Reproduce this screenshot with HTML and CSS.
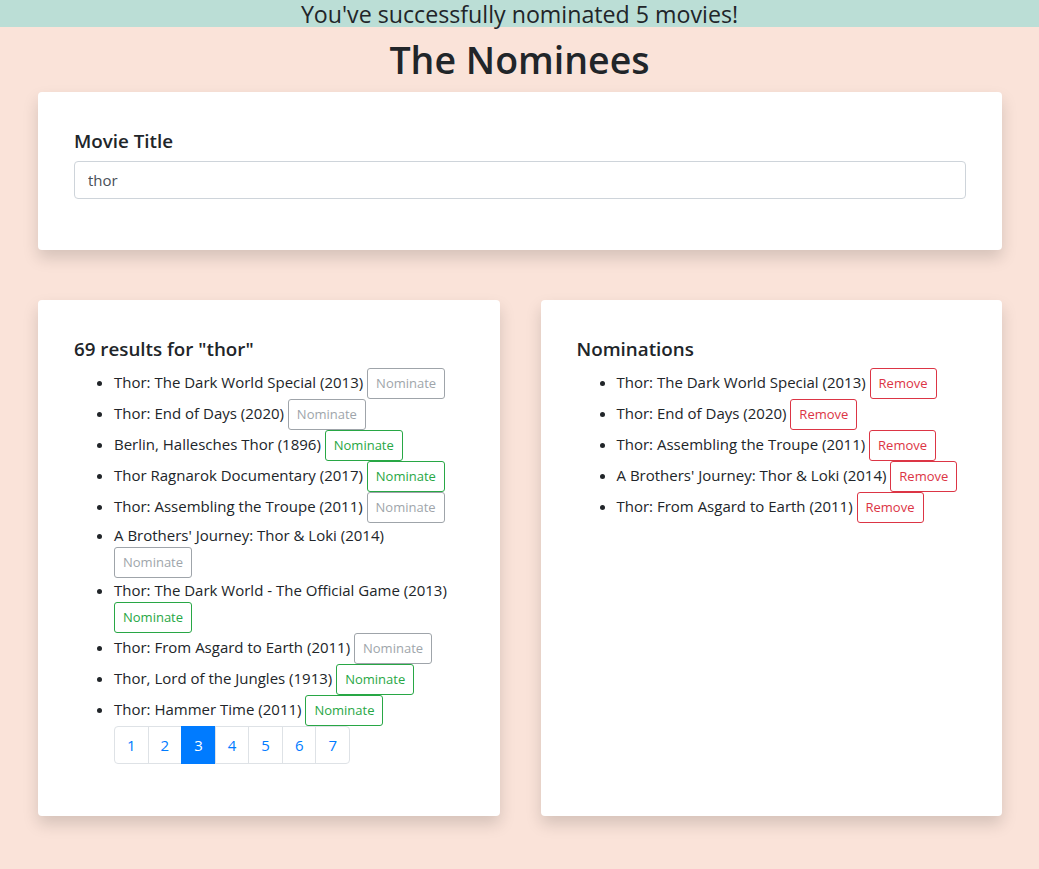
FILE: index.html
```html
<!DOCTYPE html>
<html lang="en">
<head>
<meta charset="utf-8">
<title>The Nominees</title>
<link rel="stylesheet" href="styles.css">
</head>
<body>
<div class="banner">You've successfully nominated 5 movies!</div>
<h1 class="title">The Nominees</h1>
<main class="page">
  <section class="card search-card">
    <label class="card-heading" for="movie">Movie Title</label>
    <input id="movie" class="text-input" type="text" value="thor">
  </section>
  <div class="columns">
    <section class="card">
      <h5 class="card-heading">69 results for "thor"</h5>
      <ul class="movie-list">
        <li>Thor: The Dark World Special (2013) <button class="btn btn-grey" disabled>Nominate</button></li>
        <li>Thor: End of Days (2020) <button class="btn btn-grey" disabled>Nominate</button></li>
        <li>Berlin, Hallesches Thor (1896) <button class="btn btn-green">Nominate</button></li>
        <li>Thor Ragnarok Documentary (2017) <button class="btn btn-green">Nominate</button></li>
        <li>Thor: Assembling the Troupe (2011) <button class="btn btn-grey" disabled>Nominate</button></li>
        <li>A Brothers' Journey: Thor &amp; Loki (2014) <button class="btn btn-grey" disabled>Nominate</button></li>
        <li>Thor: The Dark World - The Official Game (2013) <button class="btn btn-green">Nominate</button></li>
        <li>Thor: From Asgard to Earth (2011) <button class="btn btn-grey" disabled>Nominate</button></li>
        <li>Thor, Lord of the Jungles (1913) <button class="btn btn-green">Nominate</button></li>
        <li>Thor: Hammer Time (2011) <button class="btn btn-green">Nominate</button></li>
      </ul>
      <nav class="pager">
        <a class="page-link first">1</a>
        <a class="page-link">2</a>
        <a class="page-link active">3</a>
        <a class="page-link">4</a>
        <a class="page-link">5</a>
        <a class="page-link">6</a>
        <a class="page-link last">7</a>
      </nav>
    </section>
    <section class="card">
      <h5 class="card-heading">Nominations</h5>
      <ul class="movie-list">
        <li>Thor: The Dark World Special (2013) <button class="btn btn-red">Remove</button></li>
        <li>Thor: End of Days (2020) <button class="btn btn-red">Remove</button></li>
        <li>Thor: Assembling the Troupe (2011) <button class="btn btn-red">Remove</button></li>
        <li>A Brothers' Journey: Thor &amp; Loki (2014) <button class="btn btn-red">Remove</button></li>
        <li>Thor: From Asgard to Earth (2011) <button class="btn btn-red">Remove</button></li>
      </ul>
    </section>
  </div>
</main>
</body>
</html>
```

FILE: styles.css
```css
* { box-sizing: border-box; }
html, body { margin: 0; padding: 0; }
body {
  background: #fae3d9;
  color: #212529;
  font-family: "Open Sans", "Noto Sans", sans-serif;
  font-size: 15px;
  line-height: 24px;
}
.banner {
  background: #bbded6;
  height: 27px;
  line-height: 28px;
  text-align: center;
  font-size: 23.2px;
}
.title {
  margin: 9px 0 8px;
  text-align: center;
  font-size: 37.5px;
  line-height: 48px;
  font-weight: 600;
}
.page {
  padding: 0 37px 52px 38px;
}
.card {
  background: #fff;
  border-radius: 4px;
  box-shadow: 0 8px 16px rgba(0, 0, 0, 0.15);
  padding: 36px;
}
.search-card {
  padding-bottom: 51px;
  margin-bottom: 50px;
}
.card-heading {
  display: block;
  margin: 1px 0 8px;
  font-size: 18.8px;
  line-height: 24px;
  font-weight: 600;
}
.text-input {
  display: block;
  width: 100%;
  height: 38px;
  padding: 6px 13px;
  border: 1px solid #ced4da;
  border-radius: 4px;
  font: inherit;
  font-size: 15px;
  color: #495057;
}
.columns {
  display: grid;
  grid-template-columns: 1fr 1fr;
  gap: 41px;
}
.movie-list {
  margin: -1px 0 0;
  padding-left: 40px;
}
.movie-list li {
  line-height: 24px;
}
.btn {
  display: inline-block;
  vertical-align: middle;
  background: transparent;
  font-family: inherit;
  font-size: 13px;
  line-height: 21px;
  padding: 4px 8px;
  border: 1px solid;
  border-radius: 3px;
  margin: 0;
}
.btn-grey { color: #6c757d; border-color: #6c757d; opacity: 0.65; }
.btn-green { color: #28a745; border-color: #28a745; }
.btn-red { color: #dc3545; border-color: #dc3545; }
.pager {
  display: flex;
  margin: 0 0 16px 40px;
}
.page-link {
  display: block;
  padding: 8px 12px;
  line-height: 20px;
  font-size: 15px;
  color: #007bff;
  border: 1px solid #dee2e6;
  margin-left: -1px;
}
.page-link.first { margin-left: 0; border-radius: 4px 0 0 4px; }
.page-link.last { border-radius: 0 4px 4px 0; }
.page-link.active { background: #007bff; border-color: #007bff; color: #fff; }
```
